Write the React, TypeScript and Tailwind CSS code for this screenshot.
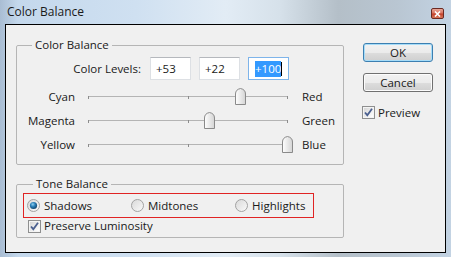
import React from "react";

function Thumb() {
  return (
    <svg width="11" height="17" viewBox="0 0 11 17">
      <defs>
        <linearGradient id="tg" x1="0" y1="0" x2="1" y2="0">
          <stop offset="0" stopColor="#ffffff" />
          <stop offset="1" stopColor="#d4d4d4" />
        </linearGradient>
      </defs>
      <path d="M0.5 16.5 V6 Q0.5 1.5 5.5 0.5 Q10.5 1.5 10.5 6 V16.5 Z" fill="url(#tg)" stroke="#8a8a8a" />
    </svg>
  );
}

function Slider({ left, right, value }: { left: string; right: string; value: number }) {
  const pos = ((value + 100) / 200) * 199;
  return (
    <div className="flex items-center h-[24px]">
      <div className="w-[58px] text-right">{left}</div>
      <div className="relative ml-[13px] w-[200px] h-[24px]">
        <svg className="absolute left-0 top-0" width="200" height="24">
          <line x1="0" y1="11.5" x2="200" y2="11.5" stroke="#b4b4b4" />
          <line x1="0.5" y1="11" x2="0.5" y2="14" stroke="#8c8c8c" />
          <line x1="100.5" y1="11" x2="100.5" y2="14" stroke="#8c8c8c" />
          <line x1="199.5" y1="11" x2="199.5" y2="14" stroke="#8c8c8c" />
        </svg>
        <div className="absolute top-[3px]" style={{ left: pos - 5 }}>
          <Thumb />
        </div>
      </div>
      <div className="ml-[14px]">{right}</div>
    </div>
  );
}

function Radio({ checked }: { checked?: boolean }) {
  return (
    <svg width="13" height="13" viewBox="0 0 13 13">
      <defs>
        <linearGradient id="rg" x1="0" y1="0" x2="1" y2="1">
          <stop offset="0" stopColor="#d8d8d8" />
          <stop offset="1" stopColor="#fbfbfb" />
        </linearGradient>
        <radialGradient id="rd" cx="0.4" cy="0.35" r="0.7">
          <stop offset="0" stopColor="#8fd0f0" />
          <stop offset="0.45" stopColor="#2a7fb8" />
          <stop offset="1" stopColor="#0f3f66" />
        </radialGradient>
      </defs>
      <circle cx="6.5" cy="6.5" r="6" fill="url(#rg)" stroke="#a2a2a2" />
      {checked && <circle cx="6.5" cy="6.5" r="3.6" fill="url(#rd)" />}
    </svg>
  );
}

function Check() {
  return (
    <svg width="13" height="13" viewBox="0 0 13 13">
      <defs>
        <linearGradient id="cg" x1="0" y1="0" x2="1" y2="1">
          <stop offset="0" stopColor="#d6d6d6" />
          <stop offset="1" stopColor="#ffffff" />
        </linearGradient>
      </defs>
      <rect x="0.5" y="0.5" width="12" height="12" fill="#f4f4f4" stroke="#8e8f8f" />
      <rect x="2" y="2" width="9" height="9" fill="url(#cg)" />
      <path d="M3 6.5 L5.3 9.2 L10 2.8" fill="none" stroke="#4a5f8f" strokeWidth="1.8" />
    </svg>
  );
}

export default function App() {
  return (
    <div className="w-[451px] h-[257px] flex flex-col bg-[linear-gradient(to_right,#a9bdd3_0%,#c4d8ec_4%,#cfe0f1_30%,#e2ecf5_50%,#d6e1ea_62%,#b4bfc8_75%,#b9c6d2_88%,#c3d3e3_100%)] font-['Segoe_UI','Open_Sans',sans-serif] text-[11.5px] text-[#1a1a1a] overflow-hidden">
      <div className="h-[24px] flex items-center justify-between">
        <span className="ml-[7px] text-[12px] leading-[16px]">Color Balance</span>
        <div className="mr-[7px] mt-[3px] w-[13px] h-[11px] rounded-[2px] border border-[#6b2a22] bg-[linear-gradient(to_bottom,#e9a99a_0%,#d9705c_45%,#c2402a_55%,#d8785a_100%)] flex items-center justify-center">
          <svg width="7" height="6" viewBox="0 0 7 6">
            <path d="M1 0.5 L6 5.5 M6 0.5 L1 5.5" stroke="#fff" strokeWidth="1.6" />
          </svg>
        </div>
      </div>
      <div className="mx-[5px] h-[229px] border border-black bg-[#f0f0f0] flex">
        <div className="pl-[10px] w-[338px] flex flex-col">
          <fieldset className="mt-[12px] h-[128px] border border-[#b5b5b5] rounded-[2px]">
            <legend className="ml-[15px] px-[3px] leading-[16px]">Color Balance</legend>
            <div className="flex items-center mt-[4px] h-[23px]">
              <div className="w-[124px] text-right">Color Levels:</div>
              <div className="ml-[9px] flex gap-[8px]">
                <div className="w-[41px] h-[23px] bg-white border border-[#dde0e4] border-t-[#b5b8bd] flex items-center pl-[5px]">+53</div>
                <div className="w-[41px] h-[23px] bg-white border border-[#dde0e4] border-t-[#b5b8bd] flex items-center pl-[5px]">+22</div>
                <div className="w-[41px] h-[23px] bg-white border border-[#7eb4ea] flex items-center pl-[6px]">
                  <span className="bg-[#3399ff] text-white leading-[16px]">+100</span>
                  <span className="w-px h-[14px] bg-black" />
                </div>
              </div>
            </div>
            <div className="mt-[5px] flex flex-col">
              <Slider left="Cyan" right="Red" value={53} />
              <Slider left="Magenta" right="Green" value={22} />
              <Slider left="Yellow" right="Blue" value={100} />
            </div>
          </fieldset>
          <fieldset className="mt-[11px] h-[62px] border border-[#b5b5b5] rounded-[2px]">
            <legend className="ml-[16px] px-[3px] leading-[16px]">Tone Balance</legend>
            <div className="ml-[6px] mt-[1px] w-[291px] h-[25px] shadow-[inset_0_0_0_1px_#e02424] flex items-center pl-[4px]">
              <div className="w-[104px] flex items-center gap-[4px]">
                <Radio checked />
                <span>Shadows</span>
              </div>
              <div className="w-[104px] flex items-center gap-[4px]">
                <Radio />
                <span>Midtones</span>
              </div>
              <div className="flex items-center gap-[4px]">
                <Radio />
                <span>Highlights</span>
              </div>
            </div>
            <div className="ml-[11px] mt-[1px] h-[14px] flex items-center gap-[3px]">
              <Check />
              <span>Preserve Luminosity</span>
            </div>
          </fieldset>
        </div>
        <div className="ml-[19px] w-[70px] flex flex-col">
          <div className="mt-[18px] h-[19px] rounded-[3px] border border-[#3c7fb1] shadow-[inset_0_0_0_1px_#a6dcf8] bg-[linear-gradient(to_bottom,#f2f2f2_0%,#ebebeb_50%,#dddddd_51%,#cfcfcf_100%)] flex items-center justify-center leading-none">
            OK
          </div>
          <div className="mt-[11px] h-[19px] rounded-[3px] border border-[#707070] shadow-[inset_0_0_0_1px_#fcfcfc] bg-[linear-gradient(to_bottom,#f2f2f2_0%,#ebebeb_50%,#dddddd_51%,#cfcfcf_100%)] flex items-center justify-center leading-none">
            Cancel
          </div>
          <div className="mt-[12px] -ml-[1px] flex items-center gap-[3px]">
            <Check />
            <span>Preview</span>
          </div>
        </div>
      </div>
    </div>
  );
}
